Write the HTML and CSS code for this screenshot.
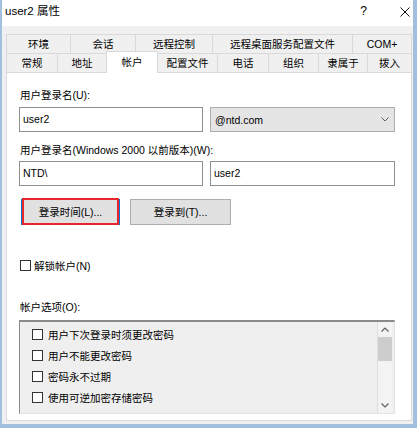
FILE: index.html
```html
<!DOCTYPE html>
<html lang="zh-CN">
  <head>
    <meta charset="UTF-8" />
    <meta name="viewport" content="width=device-width, initial-scale=1.0" />
    <title>user2 属性</title>
    <link rel="stylesheet" href="styles.css">
  </head>
  <body>
    <div class="window">
      <div class="titlebar">
        <span class="title">user2 属性</span>
        <span class="help">?</span>
        <span class="close">
          <svg width="10" height="10" viewBox="0 0 10 10">
            <path d="M0.5 0.5L9.5 9.5M9.5 0.5L0.5 9.5" stroke="#111" stroke-width="1" fill="none" />
          </svg>
        </span>
      </div>

      <div class="dialog">
        <div class="tabrow back">
          <div class="tab">环境</div>
          <div class="tab">会话</div>
          <div class="tab">远程控制</div>
          <div class="tab">远程桌面服务配置文件</div>
          <div class="tab">COM+</div>
        </div>
        <div class="tabrow front">
          <div class="tab">常规</div>
          <div class="tab">地址</div>
          <div class="tab active">帐户</div>
          <div class="tab">配置文件</div>
          <div class="tab">电话</div>
          <div class="tab">组织</div>
          <div class="tab">隶属于</div>
          <div class="tab">拨入</div>
        </div>

        <div class="panel">
          <div class="label">用户登录名(U):</div>
          <div class="fieldrow first">
            <div class="textbox">user2</div>
            <div class="combo">
              <span>@ntd.com</span>
              <svg width="8" height="5" viewBox="0 0 8 5">
                <polyline points="0.5,0.5 4,4 7.5,0.5" stroke="#606060" stroke-width="1" fill="none" />
              </svg>
            </div>
          </div>

          <div class="label second">用户登录名(Windows 2000 以前版本)(W):</div>
          <div class="fieldrow">
            <div class="textbox">NTD\</div>
            <div class="textbox wide">user2</div>
          </div>

          <div class="buttons">
            <div class="btn default">登录时间(L)...<span class="mark"></span></div>
            <div class="btn">登录到(T)...</div>
          </div>

          <div class="check unlock">
            <span class="box"></span>
            <span>解锁帐户(N)</span>
          </div>

          <div class="label options">帐户选项(O):</div>
          <div class="listbox">
            <div class="items">
              <div class="check item"><span class="box"></span><span>用户下次登录时须更改密码</span></div>
              <div class="check item"><span class="box"></span><span>用户不能更改密码</span></div>
              <div class="check item"><span class="box"></span><span>密码永不过期</span></div>
              <div class="check item"><span class="box"></span><span>使用可逆加密存储密码</span></div>
              <div class="check item"><span class="box"></span><span>帐户已禁用</span></div>
            </div>
            <div class="scrollbar">
              <div class="arrow up">
                <svg width="8" height="5" viewBox="0 0 8 5">
                  <polyline points="0.5,4.5 4,1 7.5,4.5" stroke="#606060" stroke-width="1.2" fill="none" />
                </svg>
              </div>
              <div class="thumb"></div>
              <div class="track"></div>
              <div class="arrow down">
                <svg width="8" height="5" viewBox="0 0 8 5">
                  <polyline points="0.5,0.5 4,4 7.5,0.5" stroke="#606060" stroke-width="1.2" fill="none" />
                </svg>
              </div>
            </div>
          </div>
        </div>
      </div>
    </div>
  </body>
</html>
```

FILE: styles.css
```css
* {
  box-sizing: border-box;
}

body {
  margin: 0;
  font-family: "Liberation Sans", "Noto Sans CJK SC", sans-serif;
  font-size: 10.5px;
  color: #000;
  background: #fff;
}

.window {
  width: 417px;
  height: 428px;
  display: flex;
  flex-direction: column;
  border-style: solid;
  border-color: #a3bfdf;
  border-width: 0 4px 4px 2px;
  background: #f0f0f0;
}

.titlebar {
  height: 26px;
  flex: none;
  display: flex;
  padding: 4px 3px 0 3px;
  background: #fff;
  font-size: 11.5px;
  line-height: 14px;
}
.title {
  flex: 1;
}
.help {
  font-size: 12px;
  margin-right: 33px;
}
.close {
  padding-top: 2px;
}

.dialog {
  flex: 1;
  min-height: 0;
  display: flex;
  flex-direction: column;
  padding: 8px 1px 3px 4px;
}

/* tabs */
.tabrow {
  display: grid;
  height: 19px;
  flex: none;
}
.tabrow.back {
  grid-template-columns: 64px 65px 77px 140px 60px;
}
.tabrow.front {
  grid-template-columns: 51px 49px 52px 59px 51px 50px 49px 45px;
}
.tab {
  height: 19px;
  border-top: 1px solid #d9d9d9;
  border-left: 1px solid #d9d9d9;
  background: #f0f0f0;
  text-align: center;
  line-height: 18px;
  white-space: nowrap;
}
.tab:last-child {
  border-right: 1px solid #d9d9d9;
}
.tab.active {
  position: relative;
  z-index: 1;
  height: 22px;
  margin-top: -2px;
  border-right: 1px solid #d9d9d9;
  background: #fff;
  line-height: 20px;
}
.tab.active + .tab {
  border-left: none;
}

/* panel */
.panel {
  flex: 1;
  min-height: 0;
  overflow: hidden;
  background: #fff;
  border: 1px solid #d9d9d9;
  padding: 15px 0 0 12px;
}

.label {
  height: 14px;
  line-height: 14px;
  padding-left: 1px;
  white-space: nowrap;
}
.label.second {
  margin-top: 11px;
}
.label.options {
  margin-top: 28px;
}

.fieldrow {
  display: flex;
  gap: 7px;
  height: 25px;
  margin-top: 4px;
}
.fieldrow.first {
  margin-top: 5px;
}
.textbox {
  width: 184px;
  border: 1px solid #8f8f8f;
  background: #fff;
  padding-left: 3px;
  line-height: 23px;
}
.textbox.wide {
  width: 185px;
}
.combo {
  width: 185px;
  display: flex;
  justify-content: space-between;
  align-items: center;
  padding: 0 5px 0 4px;
  border: 1px solid #adadad;
  background: #e5e5e5;
}

.buttons {
  display: flex;
  gap: 10px;
  margin-top: 13px;
  padding-left: 2px;
}
.btn {
  width: 101px;
  height: 26px;
  border: 1px solid #adadad;
  background: #e1e1e1;
  text-align: center;
  line-height: 24px;
}
.btn.default {
  position: relative;
  width: 99px;
  border-color: #0078d7;
}
.mark {
  position: absolute;
  left: 0;
  right: 0;
  top: -2px;
  bottom: -1px;
  border: 2px solid #e8262b;
}

.check {
  display: flex;
  align-items: center;
  white-space: nowrap;
}
.box {
  width: 11px;
  height: 11px;
  flex: none;
  border: 1px solid #333;
  background: #fff;
}
.check.unlock {
  height: 14px;
  margin-top: 33px;
  padding-left: 1px;
  gap: 3px;
}

/* account options list */
.listbox {
  display: flex;
  width: 376px;
  height: 94px;
  margin-top: 6px;
  border-style: solid;
  border-width: 2px 1px 1px 1px;
  border-color: #8a8a8a #e3e3e3 #e3e3e3 #8a8a8a;
  background: #efefef;
  overflow: hidden;
}
.items {
  flex: 1;
  padding: 2px 0 0 12px;
}
.check.item {
  height: 21px;
  gap: 5px;
}
.scrollbar {
  width: 15px;
  margin-right: 2px;
  display: flex;
  flex-direction: column;
  background: #f3f3f3;
  border-left: 1px solid #dedede;
}
.arrow {
  display: flex;
  align-items: center;
  justify-content: center;
}
.arrow.up {
  height: 15px;
}
.arrow.down {
  height: 16px;
}
.thumb {
  height: 24px;
  background: #cdcdcd;
}
.track {
  flex: 1;
}
```
